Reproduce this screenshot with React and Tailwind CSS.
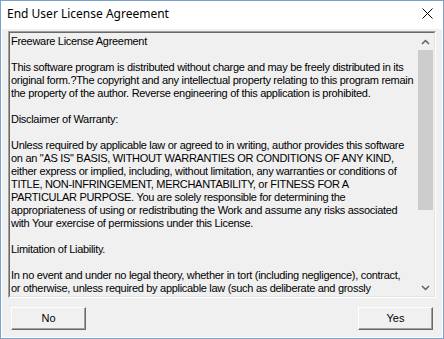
import React from "react";

/* ===== License text, broken as the dialog shows it ===== */
const lines = [
  "Freeware License Agreement",
  "",
  "This software program is distributed without charge and may be freely distributed in its",
  "original form.?The copyright and any intellectual property relating to this program remain",
  "the property of the author. Reverse engineering of this application is prohibited.",
  "",
  "Disclaimer of Warranty:",
  "",
  "Unless required by applicable law or agreed to in writing, author provides this software",
  'on an "AS IS" BASIS, WITHOUT WARRANTIES OR CONDITIONS OF ANY KIND,',
  "either express or implied, including, without limitation, any warranties or conditions of",
  "TITLE, NON-INFRINGEMENT, MERCHANTABILITY, or FITNESS FOR A",
  "PARTICULAR PURPOSE. You are solely responsible for determining the",
  "appropriateness of using or redistributing the Work and assume any risks associated",
  "with Your exercise of permissions under this License.",
  "",
  "Limitation of Liability.",
  "",
  "In no event and under no legal theory, whether in tort (including negligence), contract,",
  "or otherwise, unless required by applicable law (such as deliberate and grossly",
];

const btn =
  "w-[75px] h-[23px] bg-[#f0f0f0] border border-t-white border-l-white border-r-[#696969] border-b-[#696969] shadow-[inset_-1px_-1px_0_#a0a0a0] text-[11px] text-black";

const Chevron = ({ up }) => (
  <svg width="9" height="6" viewBox="0 0 9 6">
    <path
      d={up ? "M1 5 L4.5 1.5 L8 5" : "M1 1 L4.5 4.5 L8 1"}
      fill="none"
      stroke="#606060"
      strokeWidth="1.5"
    />
  </svg>
);

export default function App() {
  return (
    <div className="w-[444px] h-[339px] bg-white" style={{ fontFamily: '"Liberation Sans", Arial, sans-serif' }}>
      <div className="w-full h-full border border-[#7aa1c9] flex flex-col bg-white">
        {/* title bar */}
        <div className="h-[28px] flex items-center justify-between pl-[6px] pr-[10px] pb-[3px] shrink-0">
          <span className="text-[12px] text-black" style={{ fontFamily: '"Noto Sans", sans-serif' }}>
            End User License Agreement
          </span>
          <svg width="11" height="11" viewBox="0 0 11 11">
            <path d="M0.5 0.5 L10.5 10.5 M10.5 0.5 L0.5 10.5" stroke="#000" strokeWidth="1" />
          </svg>
        </div>

        {/* client area */}
        <div className="flex-1 mx-[1px] mb-[1px] bg-[#f0f0f0] px-[6px] pt-[2px] flex flex-col">
          <div className="h-[267px] flex border border-t-[#a0a0a0] border-l-[#a0a0a0] border-r-white border-b-white">
            <div className="flex-1 flex border border-t-[#696969] border-l-[#696969] border-r-[#e3e3e3] border-b-[#e3e3e3] overflow-hidden">
              <div className="flex-1 pl-[1px] pt-[2px] text-[11px] leading-[13px] text-black tracking-[-0.3px] overflow-hidden">
                {lines.map((l, i) => (
                  <div key={i} className="h-[13px] whitespace-nowrap">
                    {l}
                  </div>
                ))}
              </div>
              {/* scrollbar */}
              <div className="w-[17px] flex flex-col bg-[#f0f0f0]">
                <div className="h-[17px] flex items-center justify-center">
                  <Chevron up />
                </div>
                <div className="flex-1 flex flex-col">
                  <div className="h-[160px] mx-[1px] bg-[#cdcdcd]" />
                </div>
                <div className="h-[17px] flex items-center justify-center">
                  <Chevron />
                </div>
              </div>
            </div>
          </div>

          <div className="flex justify-between px-[3px] mt-[9px]">
            <button className={btn}>No</button>
            <button className={btn}>Yes</button>
          </div>
        </div>
      </div>
    </div>
  );
}
